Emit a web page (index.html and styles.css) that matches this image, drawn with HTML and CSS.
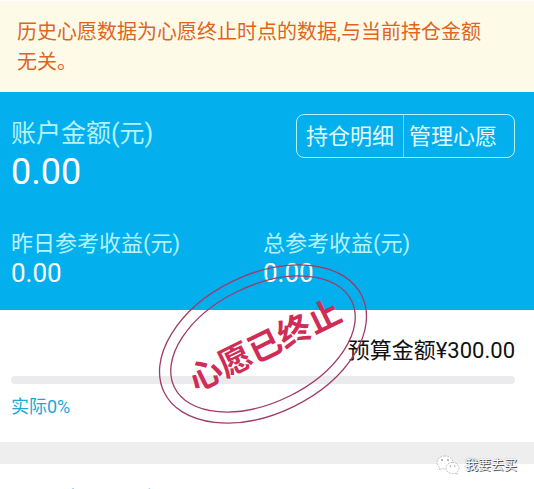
FILE: index.html
```html
<!DOCTYPE html>
<html lang="zh-CN">

<head>
    <meta charset="UTF-8">
    <meta name="viewport" content="width=device-width, initial-scale=1.0">
    <title>心愿</title>
    <link rel="stylesheet" href="styles.css">
</head>

<body>
    <p class="notice">历史心愿数据为心愿终止时点的数据,与当前持仓金额无关。</p>

    <main class="wish">
        <section class="account">
            <div class="account-top">
                <div>
                    <div class="total-label">账户金额(元)</div>
                    <div class="total-value">0.00</div>
                </div>
                <div class="actions">
                    <button type="button">持仓明细</button>
                    <button type="button">管理心愿</button>
                </div>
            </div>
            <div class="income">
                <div>
                    <div class="income-label">昨日参考收益(元)</div>
                    <div class="income-value">0.00</div>
                </div>
                <div>
                    <div class="income-label">总参考收益(元)</div>
                    <div class="income-value">0.00</div>
                </div>
            </div>
        </section>

        <section class="budget">
            <div class="budget-amount">预算金额¥300.00</div>
            <div class="progress"></div>
            <div class="actual">实际0%</div>
        </section>

        <svg class="stamp" width="210" height="162" viewBox="-105 -81 210 162">
            <g transform="rotate(-26)">
                <ellipse rx="110" ry="69.7" />
                <ellipse rx="98.6" ry="58.4" />
                <text x="1" y="14" text-anchor="middle">心愿已终止</text>
            </g>
        </svg>
    </main>

    <section class="detail">
        <h2>心愿交易进度</h2>
    </section>

    <div class="watermark">
        <svg width="24" height="20" viewBox="0 0 24 20">
            <path d="M9 1C4.500 1 1 3.800 1 7.500c0 2.100 1.100 3.900 2.900 5.100L3 15l3-1.500c1 .3 2 .5 3 .5 4.500 0 8-2.900 8-6.500S13.500 1 9 1z" />
            <path d="M16.500 7.500c-3.700 0-6.500 2.400-6.500 5.500s2.900 5.500 6.500 5.500c.8 0 1.600-.1 2.300-.4l2.700 1.300-.8-2.200c1.500-1 2.300-2.500 2.300-4.200 0-3.100-2.900-5.500-6.500-5.500z" />
            <g class="eyes">
                <circle cx="6" cy="5" r="0.800" />
                <circle cx="12" cy="5" r="0.800" />
                <circle cx="14.500" cy="11" r="0.600" />
                <circle cx="18.800" cy="11" r="0.600" />
            </g>
        </svg>
        <span>我要去买</span>
    </div>
</body>

</html>
```

FILE: styles.css
```css
body {
    font-family: Roboto, "Noto Sans CJK SC", sans-serif;
    margin: 0;
    height: 100vh;
    overflow: hidden;
    background: #fff;
    position: relative;
}

.notice {
    margin: 1px 0 0;
    padding: 16px 40px 15px 17px;
    font-size: 20px;
    line-height: 30px;
    color: #e0641e;
    background: #fdfbe8;
}

.wish {
    position: relative;
}

.account {
    padding: 22px 19px 23px 11px;
    background: #03b0ed;
    color: #fff;
}

.account-top {
    display: flex;
    justify-content: space-between;
    align-items: flex-start;
}

.total-label {
    font-size: 25px;
    line-height: 40px;
    color: #b4f3fd;
}

.total-value {
    font-size: 36px;
    line-height: 36px;
}

.actions {
    display: flex;
    box-sizing: border-box;
    height: 44px;
    border: 1px solid #b4f3fd;
    border-radius: 8px;
}

.actions button {
    padding: 0 9px 4px;
    border: none;
    background: none;
    color: #e6fcff;
    font-family: inherit;
    font-size: 22px;
}

.actions button + button {
    padding: 0 17px 4px 5px;
    border-left: 1px solid #6fd6f6;
}

.income {
    display: grid;
    grid-template-columns: 1fr 1fr;
    margin-top: 39px;
}

.income-label {
    font-size: 22px;
    line-height: 30px;
    color: #b4f3fd;
}

.income-value {
    font-size: 26px;
    line-height: 28px;
}

.budget {
    padding: 25px 19px 22px 11px;
    border-bottom: 22px solid #eee;
}

.budget-amount {
    font-size: 22px;
    line-height: 32px;
    text-align: right;
    color: #111;
}

.progress {
    height: 8px;
    margin: 9px 0 10px;
    border-radius: 4px;
    background: #ebebed;
}

.actual {
    font-size: 18px;
    line-height: 26px;
    color: #1ba7d9;
}

/* ended stamp, lies over both sections */
.stamp {
    position: absolute;
    top: 171px;
    left: calc(50% - 109px);
    overflow: visible;
}

.stamp ellipse {
    fill: none;
    stroke: #a03a68;
    stroke-width: 1.300;
}

.stamp text {
    font-family: "Noto Sans CJK SC", sans-serif;
    font-size: 33px;
    font-weight: 700;
    fill: #d02c56;
}

.detail {
    padding: 19px 11px;
}

.detail h2 {
    margin: 0;
    font-size: 25px;
    font-weight: 400;
    line-height: 38px;
    color: #03b0ed;
}

.watermark {
    position: absolute;
    right: 17px;
    bottom: 14px;
    display: flex;
    align-items: center;
    gap: 5px;
    font-size: 13px;
    line-height: 20px;
    color: #fff;
    text-shadow: 1px 1px 0 #555, 0 0 1px #666;
}

.watermark path {
    fill: #fff;
    stroke: #aaa;
    stroke-width: 0.700;
    stroke-dasharray: 2 1;
}

.watermark .eyes {
    fill: #555;
}
```
